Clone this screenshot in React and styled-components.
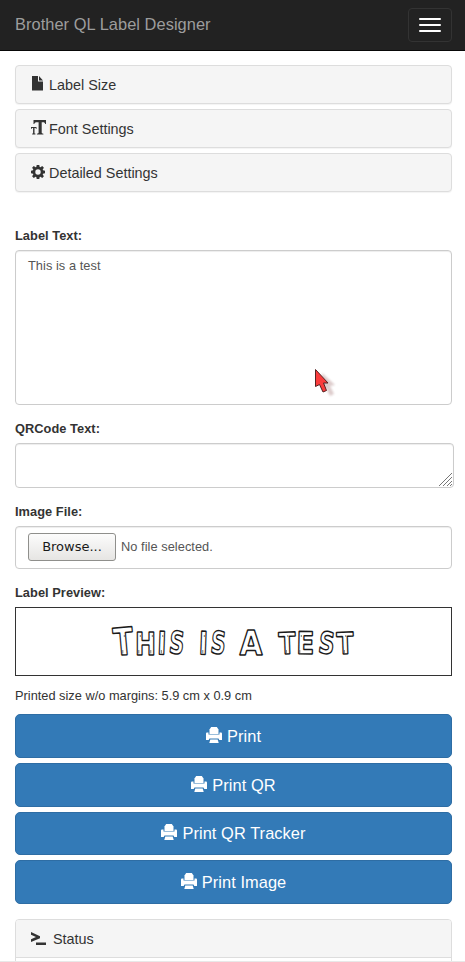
import React from "react";
import styled, { createGlobalStyle } from "styled-components";

const Global = createGlobalStyle`
  * { box-sizing: border-box; }
  html, body { margin: 0; padding: 0; background: #fff; }
  body {
    font-family: "Liberation Sans", Arial, sans-serif;
    font-size: 13px;
    color: #333;
    height: 962px;
    overflow: hidden;
  }
`;

const Page = styled.div`
  height: 962px;
  overflow: hidden;
  display: flex;
  flex-direction: column;
  border-bottom: 1px solid #e8e8e8;
`;

const Navbar = styled.header`
  flex: none;
  height: 51px;
  background: #222;
  border-bottom: 1px solid #080808;
  display: flex;
  align-items: center;
  justify-content: space-between;
  padding: 0 13px 1px 15px;
`;

const Brand = styled.span`
  font-size: 16.4px;
  letter-spacing: 0.05px;
  color: #9d9d9d;
`;

const Toggle = styled.button`
  width: 44px;
  height: 34px;
  padding: 0;
  border: 1px solid #333;
  border-radius: 4px;
  background: transparent;
  display: flex;
  flex-direction: column;
  gap: 4px;
  align-items: center;
  justify-content: center;
`;

const ToggleBar = styled.span`
  width: 22px;
  height: 2px;
  border-radius: 1px;
  background: #fff;
`;

const Main = styled.main`
  flex: 1;
  min-height: 0;
  overflow: hidden;
  padding: 14px 13px 0 15px;
  display: flex;
  flex-direction: column;
`;

const Panels = styled.section`
  flex: none;
  display: flex;
  flex-direction: column;
  gap: 5px;
  margin-bottom: 33px;
`;

const Panel = styled.div`
  flex: none;
  height: 39px;
  padding: 0 15px;
  display: flex;
  align-items: center;
  gap: ${(p) => p.$gap || 4}px;
  font-size: 14.4px;
  background: #f5f5f5;
  border: 1px solid #ddd;
  border-radius: 4px;
  box-shadow: 0 1px 1px rgba(0, 0, 0, 0.05);
`;

const Icon = styled.svg`
  flex: none;
  display: block;
  width: ${(p) => p.$w}px;
  height: ${(p) => p.$h}px;
  fill: currentColor;
  margin-top: ${(p) => p.$top || 0}px;
`;

const Label = styled.label`
  flex: none;
  height: ${(p) => p.$h}px;
  padding-top: ${(p) => p.$top}px;
  line-height: 15px;
  font-size: 12.8px;
  letter-spacing: 0.05px;
  font-weight: bold;
`;

const Field = styled.div`
  flex: none;
  position: relative;
  height: ${(p) => p.$h}px;
  margin-right: ${(p) => p.$right || 0}px;
  padding: 7px 12px;
  border: 1px solid #ccc;
  border-radius: 4px;
  box-shadow: inset 0 1px 1px rgba(0, 0, 0, 0.075);
  line-height: 15px;
  font-size: 12.8px;
  letter-spacing: 0.05px;
  color: #555;
`;

const FileField = styled(Field)`
  display: flex;
  align-items: center;
  gap: 5px;
  padding: 0 12px 2px;
`;

const Browse = styled.button`
  width: 88px;
  height: 28px;
  padding: 0 0 1px;
  border: 1px solid #8f8f8c;
  border-radius: 3px;
  background: linear-gradient(#fcfcfc, #e6e5e3);
  font-family: "DejaVu Sans", sans-serif;
  font-size: 13px;
  color: #1a1a1a;
`;

const Grip = styled.svg`
  position: absolute;
  right: 1px;
  bottom: 1px;
  width: 13px;
  height: 13px;
  stroke: #777;
`;

const Cursor = styled.svg`
  position: absolute;
  left: 298px;
  top: 117px;
  width: 26px;
  height: 32px;
`;

const Preview = styled.div`
  flex: none;
  height: 69px;
  border: 1px solid #333;
`;

const Artwork = styled.svg`
  display: block;
  width: 435px;
  height: 67px;
`;

const Note = styled.p`
  flex: none;
  height: 38px;
  margin: 0;
  padding-top: 12px;
  line-height: 15px;
  font-size: 12.8px;
`;

const Actions = styled.div`
  flex: none;
  display: grid;
  grid-template-rows: 44px 44px 43px 44px;
  gap: 5px;
  margin-bottom: 15px;
`;

const PrintButton = styled.button`
  padding: 0;
  display: flex;
  align-items: center;
  justify-content: center;
  gap: 5px;
  border: 1px solid #2e6da4;
  border-radius: 5px;
  background: #337ab7;
  color: #fff;
  font-family: inherit;
  font-size: 16.4px;
  letter-spacing: 0.07px;
`;

const StatusPanel = styled.div`
  flex: none;
  height: 60px;
  border: 1px solid #ddd;
  border-radius: 4px 4px 0 0;
`;

const StatusHeading = styled.div`
  height: 38px;
  padding: 0 15px;
  display: flex;
  align-items: center;
  gap: 7px;
  background: #f5f5f5;
  border-bottom: 1px solid #ddd;
  border-radius: 3px 3px 0 0;
  font-size: 14.4px;
`;

const FileIcon = () => (
  <Icon $w={14} $h={15} $top={-2} viewBox="0 0 14 15">
    <path d="M1 0h6v5.500h5V14.500H1zM8 0l4 4.500H8z" />
  </Icon>
);

const TextSizeIcon = () => (
  <Icon $w={15} $h={15} $top={-2} viewBox="0 0 15 15">
    <path d="M2.500 0H15v4h-.8c-.2-1.300-.8-1.800-2.200-1.800h-1.300v10.300c0 .8.400 1.100 1.700 1.200v.8H5.900v-.8c1.300-.1 1.700-.4 1.700-1.200V2.200H6C4.300 2.200 3.500 2.700 3.300 4h-.8z" />
    <path d="M0 7h5.500v2H5c-.1-.7-.4-.9-1-.9h-.5v4.800c0 .5.200.6.900.7v.8H1.200v-.8c.7-.1.900-.2.900-.7V8.100h-.6c-.7 0-.9.200-1 .9H0z" />
  </Icon>
);

const CogIcon = () => (
  <Icon $w={14} $h={14} $top={-2} viewBox="0 0 14 14">
    <path fillRule="evenodd" d="M5.700 0h2.600l.4 2 .8.300L11.200 1.100l1.700 1.700-1.200 1.700.3.800 2 .4v2.600l-2 .4-.3.800 1.200 1.700-1.700 1.700-1.700-1.200-.8.300-.4 2H5.700l-.4-2-.8-.3-1.700 1.200-1.700-1.700 1.200-1.700-.3-.8-2-.4V5.700l2-.4.3-.8L1.100 2.800l1.700-1.700 1.700 1.200.8-.3zM7 4.300a2.700 2.700 0 1 0 0 5.400 2.700 2.700 0 0 0 0-5.400z" />
  </Icon>
);

const PrinterIcon = () => (
  <Icon $w={16} $h={16} $top={-3} viewBox="0 0 16 16">
    <path d="M5.200 0h5.600l1.700 2.500V7h-9V2.500z" />
    <path d="M0 6.800C0 6 .5 5.500 1.200 5.500H2.500v2.100h11V5.500h1.300c.7 0 1.200.5 1.200 1.300V13h-2.700l-.8-1.500h-9L2.700 13H0z" />
    <path d="M4.300 12.600h7.400l1 3.400H3.300z" />
  </Icon>
);

const ConsoleIcon = () => (
  <Icon $w={15} $h={13} $top={-1} viewBox="0 0 15 13">
    <path d="M0 0l9 4.200v2L0 10V7.200L5 5.100 0 2.800zM5 10.500h10V13H5z" />
  </Icon>
);

// [character, centre x, baseline, font size, width, rotation]
const glyphs = [
  ["T", 107.5, 47, 38, 20, -5],
  ["H", 129.5, 47, 32, 21, 0],
  ["I", 146, 46.5, 32, 9, 2],
  ["S", 161, 45.5, 31, 15, 6],
  ["I", 187.5, 46.5, 32, 9, 2],
  ["S", 202.5, 45.5, 31, 15, 6],
  ["A", 235, 47, 34, 23, 0],
  ["T", 271, 46, 30, 17, -2],
  ["E", 289.5, 46, 31, 18, 1],
  ["S", 311, 45.5, 30, 16, 7],
  ["T", 329, 46, 30, 17, -2],
];

// Centres of the letters' stems, where the nails and the grain are drawn
const nails = [107.5, 123.5, 135.5, 146, 187.5, 271, 284.5, 329];

const LabelArtwork = () => (
  <Artwork viewBox="0 0 435 67" role="img" aria-label="This is a test">
    <g
      fontFamily="DejaVu Sans, sans-serif"
      fontWeight="bold"
      textAnchor="middle"
      fill="#fff"
      stroke="#1a1a1a"
      strokeWidth="1.5"
      strokeLinejoin="bevel"
    >
      {glyphs.map(([ch, x, y, size, width, turn], i) => (
        <text
          key={i}
          x={x}
          y={y}
          fontSize={size}
          textLength={width}
          lengthAdjust="spacingAndGlyphs"
          transform={`rotate(${turn} ${x} ${y - 12})`}
        >
          {ch}
        </text>
      ))}
    </g>
    <g stroke="#555" strokeWidth=".8">
      {nails.map((x) => (
        <g key={x}>
          <line x1={x - 0.7} y1="42" x2={x - 0.7} y2="45.5" />
          <line x1={x + 0.8} y1="27" x2={x + 0.8} y2="29" />
        </g>
      ))}
    </g>
  </Artwork>
);

const actions = ["Print", "Print QR", "Print QR Tracker", "Print Image"];

export default function App() {
  return (
    <Page>
      <Global />
      <Navbar>
        <Brand>Brother QL Label Designer</Brand>
        <Toggle aria-label="Toggle navigation">
          <ToggleBar />
          <ToggleBar />
          <ToggleBar />
        </Toggle>
      </Navbar>
      <Main>
        <Panels>
          <Panel><FileIcon />Label Size</Panel>
          <Panel $gap={3}><TextSizeIcon />Font Settings</Panel>
          <Panel><CogIcon />Detailed Settings</Panel>
        </Panels>
        <Label $h={25} $top={3}>Label Text:</Label>
        <Field $h={155}>
          This is a test
          <Cursor viewBox="0 0 26 32">
            <defs>
              <filter id="soft" x="-50%" y="-50%" width="200%" height="200%">
                <feGaussianBlur stdDeviation="1" />
              </filter>
            </defs>
            <path d="M8 5l13 12-5 1 4 8-4 2-4-8-4 3z" fill="#b99" opacity=".5" filter="url(#soft)" />
            <path d="M1.500 1.500v17l4-2 3.500 7.500 3.500-1.500-3-7.500h4.500z" fill="#fa3c3c" stroke="#522" />
          </Cursor>
        </Field>
        <Label $h={38} $top={16}>QRCode Text:</Label>
        <Field $h={45} $right={-2}>
          <Grip viewBox="0 0 13 13">
            <path d="M0 13L13 0M4 13l9-9M8 13l5-5M11 13l2-2" />
          </Grip>
        </Field>
        <Label $h={38} $top={16}>Image File:</Label>
        <FileField $h={43}>
          <Browse>Browse...</Browse>
          No file selected.
        </FileField>
        <Label $h={38} $top={16}>Label Preview:</Label>
        <Preview><LabelArtwork /></Preview>
        <Note>Printed size w/o margins: 5.9 cm x 0.9 cm</Note>
        <Actions>
          {actions.map((name) => (
            <PrintButton key={name}><PrinterIcon />{name}</PrintButton>
          ))}
        </Actions>
        <StatusPanel>
          <StatusHeading><ConsoleIcon />Status</StatusHeading>
        </StatusPanel>
      </Main>
    </Page>
  );
}
